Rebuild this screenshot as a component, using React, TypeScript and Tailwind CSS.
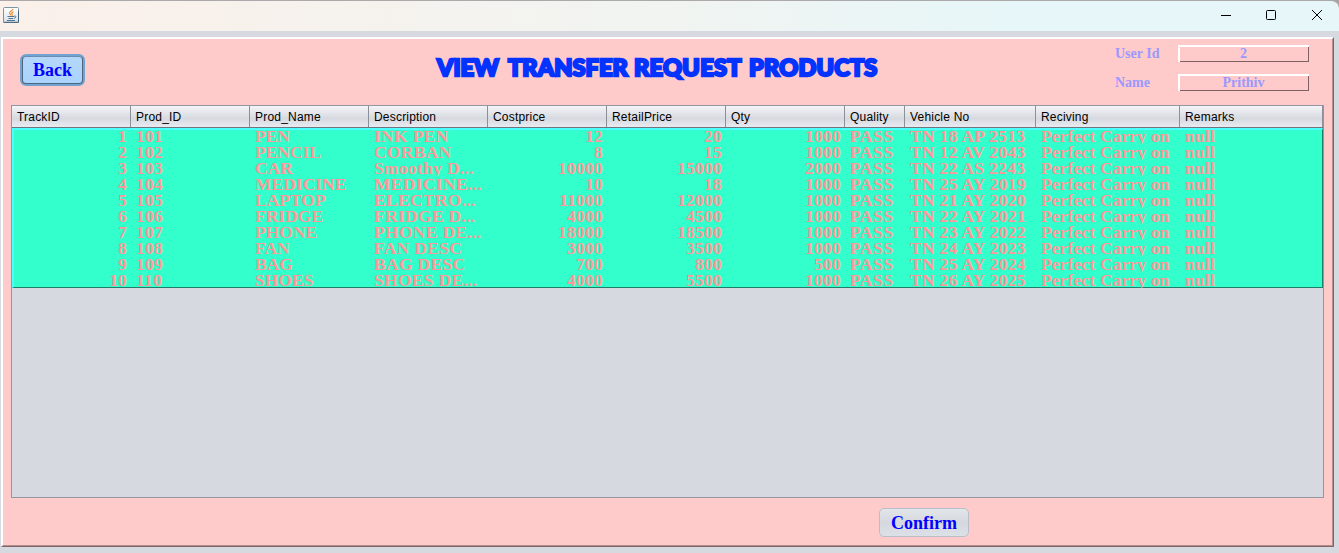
const columns = ['TrackID', 'Prod_ID', 'Prod_Name', 'Description', 'Costprice', 'RetailPrice', 'Qty', 'Quality', 'Vehicle No', 'Reciving', 'Remarks'];

const numeric = new Set([0, 4, 5, 6]);

const rows = [
  ['1', '101', 'PEN', 'INK PEN', '12', '20', '1000', 'PASS', 'TN 18 AP 2513'],
  ['2', '102', 'PENCIL', 'CORBAN', '8', '15', '1000', 'PASS', 'TN 12 AV 2043'],
  ['3', '103', 'CAR', 'Smoothy D...', '10000', '15000', '2000', 'PASS', 'TN 22 AS 2243'],
  ['4', '104', 'MEDICINE', 'MEDICINE...', '10', '18', '1000', 'PASS', 'TN 25 AY 2019'],
  ['5', '105', 'LAPTOP', 'ELECTRO...', '11000', '12000', '1000', 'PASS', 'TN 21 AY 2020'],
  ['6', '106', 'FRIDGE', 'FRIDGE D...', '4000', '4500', '1000', 'PASS', 'TN 22 AY 2021'],
  ['7', '107', 'PHONE', 'PHONE DE...', '18000', '18500', '1000', 'PASS', 'TN 23 AY 2022'],
  ['8', '108', 'FAN', 'FAN DESC', '3000', '3500', '1000', 'PASS', 'TN 24 AY 2023'],
  ['9', '109', 'BAG', 'BAG DESC', '700', '800', '500', 'PASS', 'TN 25 AY 2024'],
  ['10', '110', 'SHOES', 'SHOES DE...', '4000', '5500', '1000', 'PASS', 'TN 26 AY 2025'],
].map((r) => [...r, 'Perfect Carry on', 'null']);

const gridCols = 'grid grid-cols-[119px_119px_119px_119px_119px_119px_119px_60px_131px_144px_143px]';

function cellClass(column: number) {
  if (numeric.has(column)) return 'pr-[4px] text-right tracking-[0.25px]';
  if (column === 2) return 'pl-[5px] tracking-[0px]';
  if (column === 9) return 'pl-[5px] tracking-[0.15px]';
  if (column === 7) return 'pl-[5px] tracking-[0.6px]';
  return 'pl-[5px] tracking-[0.3px]';
}

function JavaIcon() {
  return (
    <svg width="16" height="16" viewBox="0 0 16 16">
      <defs>
        <linearGradient id="jbg" x1="0" y1="0" x2="0" y2="1">
          <stop offset="0" stopColor="#ffffff" />
          <stop offset="1" stopColor="#d9e0e6" />
        </linearGradient>
      </defs>
      <rect x="0.5" y="0.5" width="15" height="15" rx="1" fill="url(#jbg)" stroke="#7e94a5" />
      <path d="M0.5 15.3h15V4" fill="none" stroke="#41637e" />
      <path d="M10 2.200C9.500 4 6 4.400 6.600 6.200c.2.800 1.200 1.200 1 2.200M10.600 4.700C8.800 5.400 8.200 6.200 9.100 7.200c.4.500.1 1-.4 1.200" fill="none" stroke="#ee8a2c" strokeWidth="1.200" />
      <path d="M4.500 9.500h6.500M5.500 11.500h4.700M4 13.500h8M11.200 9.200c2.300-.9 2.300 1.600-.2 2.100" fill="none" stroke="#4f7590" strokeWidth="1" />
    </svg>
  );
}

function TitleBar() {
  return (
    <div className="h-[31px] shrink-0 bg-[#aaa5a4]">
      <div className="flex h-[31px] items-start justify-between rounded-tr-lg border-t border-[#aaa8a8] bg-linear-to-r from-[#fbf0ea] via-[#f1f4f1] via-50% to-[#e7f6f8] to-75%">
        <div className="pt-[6px] pl-[3px]">
          <JavaIcon />
        </div>
        <svg className="mt-[6px] mr-[15px]" width="104" height="16" viewBox="0 0 104 16" fill="none" stroke="#000" strokeWidth="1">
          <path d="M1 8.500h10" />
          <rect x="46.500" y="3.500" width="9" height="9" rx="1" />
          <path d="M92 3l10 10M102 3L92 13" />
        </svg>
      </div>
    </div>
  );
}

function Field({ label, value }: { label: string; value: string }) {
  return (
    <div className="flex h-[17px] items-center">
      <span className="w-[63px] text-[14px] leading-[17px]">{label}</span>
      <div className="h-[17px] w-[131px] border-t-2 border-l-2 border-white">
        <div className="h-[15px] w-[129px] border-r border-b border-[#7c6262] pr-[1px] text-center text-[14px] leading-[13px]">{value}</div>
      </div>
    </div>
  );
}

function Heading() {
  return (
    <h1 className="flex h-[30px] w-[446px] items-center whitespace-nowrap font-['Lato',sans-serif] text-[23.5px] leading-[30px] font-black text-[#0433ff] [-webkit-text-stroke:2.4px_#0433ff]">
      <span className="w-[71px] tracking-[0px]">VIEW</span>
      <span className="w-[126px] tracking-[0.1px]">TRANSFER</span>
      <span className="w-[115px] tracking-[0.3px]">REQUEST</span>
      <span className="w-[134px] tracking-[0.2px]">PRODUCTS</span>
    </h1>
  );
}

export default function App() {
  return (
    <div className="flex h-[553px] w-[1339px] flex-col overflow-hidden bg-[#d6d9df] font-['Liberation_Serif',serif]">
      <TitleBar />
      <main className="mt-[6px] ml-px h-[510px] w-[1333px] border border-t-white border-r-[#7f6565] border-b-[#7f6565] border-l-white">
        <div className="flex h-[508px] w-[1331px] flex-col border border-t-white border-r-[#b28e8e] border-b-[#b28e8e] border-l-white bg-[#ffcbca] pl-[8px]">
          <header className="flex h-[66px] items-start">
            <button className="mt-[15px] ml-[9px] h-[32px] w-[65px] rounded-[6px] border-2 border-[#73a4d1] bg-[#73a4d1]">
              <span className="flex h-[28px] items-center justify-center rounded-[4px] border border-[#4f657c] border-t-[#6b8db0] bg-linear-to-b from-[#b5d7fb] to-[#a9d4ff] text-[18px] leading-none font-bold text-[#0000ff]">Back</span>
            </button>
            <div className="mt-[13px] ml-[352px]">
              <Heading />
            </div>
            <div className="mt-[6px] ml-[232px] flex flex-col gap-[12px] font-bold text-[#9999ff]">
              <Field label="User Id" value="2" />
              <Field label="Name" value="Prithiv" />
            </div>
          </header>
          <section className="h-[393px] w-[1313px] border border-[#9297a1] bg-[#d6d9df]">
            <div className={`${gridCols} h-[22px] border-b border-[#6f757e] bg-linear-to-b from-[#f4f5f8] via-[#d6d9df] via-60% to-[#e9ebf1] font-['Liberation_Sans',sans-serif] text-[12px] leading-[22px] tracking-[0.2px] text-black`}>
              {columns.map((c) => (
                <div key={c} className="h-[21px] border-r border-[#8b9098] pl-[5px]">{c}</div>
              ))}
            </div>
            <div className="h-[160px] border-t-2 border-r border-b border-l-2 border-t-[#4dffff] border-r-[#1f7f68] border-b-[#1f7f68] border-l-[#4dffff] bg-[#33ffcc]">
              <div className="-mt-[2px] -ml-[2px] w-[1311px]">
                {rows.map((r) => (
                  <div key={r[0]} className={`${gridCols} h-[16px] text-[17.5px] leading-[17px] font-bold text-[#ff9999]`}>
                    {r.map((v, i) => (
                      <div key={i} className={`h-[16px] overflow-hidden whitespace-nowrap ${cellClass(i)}`}>{v}</div>
                    ))}
                  </div>
                ))}
              </div>
            </div>
          </section>
          <footer className="pt-[10px] pl-[868px]">
            <button className="flex h-[29px] w-[90px] items-center justify-center rounded-[5px] border border-[#b9bfca] bg-linear-to-b from-[#e2e5e9] via-[#d5d9df] to-[#dce0e7] text-[18px] leading-none font-bold text-[#0000ff]">Confirm</button>
          </footer>
        </div>
      </main>
    </div>
  );
}
